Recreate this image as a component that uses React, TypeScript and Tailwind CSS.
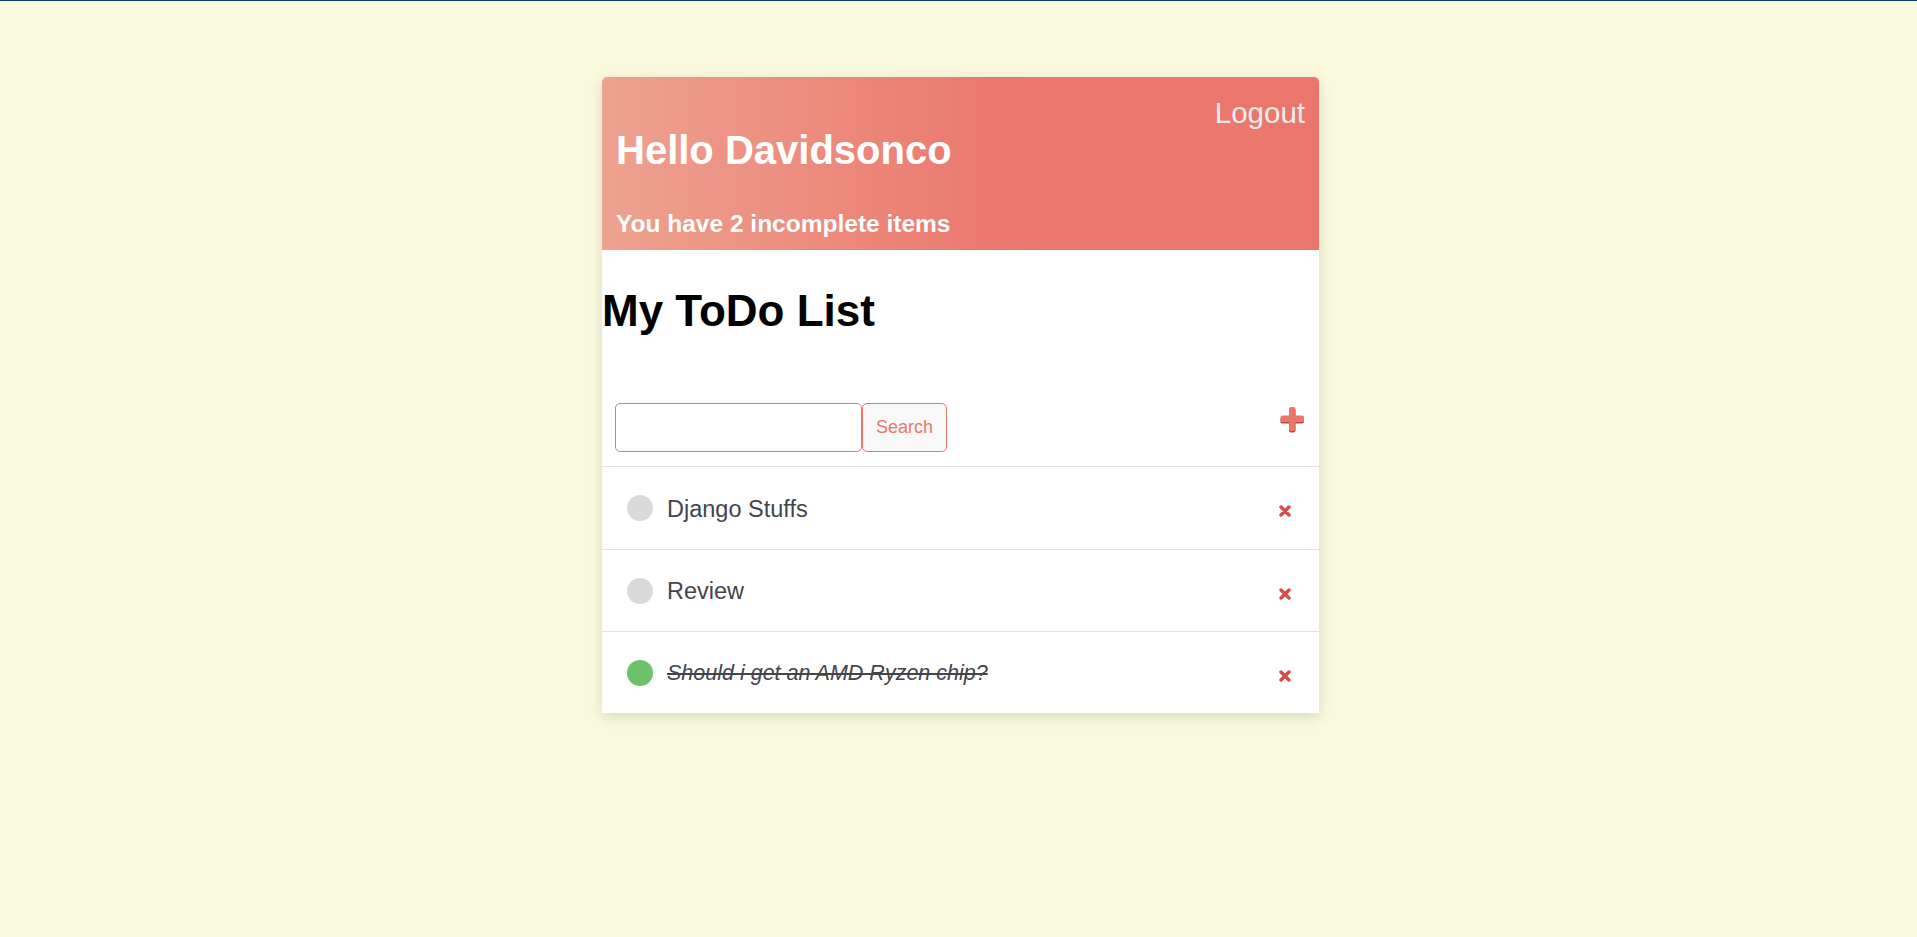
import React from "react";

const FONT = { fontFamily: '"Comic Sans MS", "Liberation Sans", Arial, sans-serif' };

function PlusIcon() {
  return (
    <svg width="25" height="26" viewBox="0 0 25 26">
      <g fill="#b54a42">
        <rect x="9" y="1.5" width="6.5" height="24" rx="2" />
        <rect x="0.5" y="10" width="23.5" height="6.5" rx="2" />
      </g>
      <g fill="#eb776c">
        <rect x="9" y="0" width="6.5" height="24" rx="2" />
        <rect x="0.5" y="8.5" width="23.5" height="6.5" rx="2" />
      </g>
    </svg>
  );
}

function XIcon() {
  return (
    <svg width="12" height="12" viewBox="0 0 12 12">
      <path d="M2 2 L10 10 M10 2 L2 10" stroke="#d64a4a" strokeWidth="3.4" strokeLinecap="round" />
    </svg>
  );
}

type Item = { title: string; done: boolean };

const items: Item[] = [
  { title: "Django Stuffs", done: false },
  { title: "Review", done: false },
  { title: "Should i get an AMD Ryzen chip?", done: true },
];

export default function App() {
  return (
    <div className="min-h-[937px] bg-[#f9f9de]" style={FONT}>
      <div className="h-px bg-[#0e3d6b]" />
      <div className="pt-[76px] flex justify-center pl-[4px]">
        <div className="w-[717px] bg-white rounded-t-[5px] shadow-[0_4px_14px_rgba(0,0,0,0.13)]">
          <div className="h-[173px] rounded-t-[5px] bg-[linear-gradient(to_right,#eea28f_0%,#eb786e_55%,#eb776c_100%)] pl-[14px] pr-[14px] pt-[21px] flex flex-col">
            <div className="flex justify-end">
              <span className="text-[29.5px] leading-none text-[#ececec]">Logout</span>
            </div>
            <h1 className="mt-[2px] text-[40px] leading-none font-bold text-white">Hello Davidsonco</h1>
            <h4 className="mt-[42px] text-[24.5px] leading-none font-bold text-white">You have 2 incomplete items</h4>
          </div>

          <h1 className="mt-[39px] text-[44px] leading-none font-bold text-black">My ToDo List</h1>

          <div className="mt-[70px] flex items-start justify-between pl-[13px] pr-[14px] pb-[14px]">
            <div className="flex">
              <input
                type="text"
                className="w-[247px] h-[49px] rounded-[5px] border border-[#eb776c] bg-white outline-none"
              />
              <button
                className="w-[85px] h-[49px] rounded-[5px] border border-[#eb776c] bg-[#f8f8f8] text-[#eb776c] text-[18px]"
                style={{ fontFamily: '"Liberation Sans", Arial, sans-serif' }}
              >
                Search
              </button>
            </div>
            <div className="mt-[4px]">
              <PlusIcon />
            </div>
          </div>

          {items.map((it, i) => (
            <div
              key={it.title}
              className={`flex items-center justify-between border-t border-[#e2e2e2] pl-[25px] pr-[28px] ${i === 0 ? "h-[83px]" : "h-[82px]"}`}
            >
              <div className="flex items-center">
                <span
                  className={`w-[26px] h-[26px] rounded-full ${it.done ? "bg-[#6cc26a]" : "bg-[#d9d9d9]"}`}
                />
                <span
                  className={`ml-[14px] mt-[3px] leading-none text-[#43454b] ${it.done ? "text-[21.5px] italic line-through decoration-2" : "text-[23.5px]"}`}
                >
                  {it.title}
                </span>
              </div>
              <div className="mt-[6px]">
                <XIcon />
              </div>
            </div>
          ))}
        </div>
      </div>
    </div>
  );
}
